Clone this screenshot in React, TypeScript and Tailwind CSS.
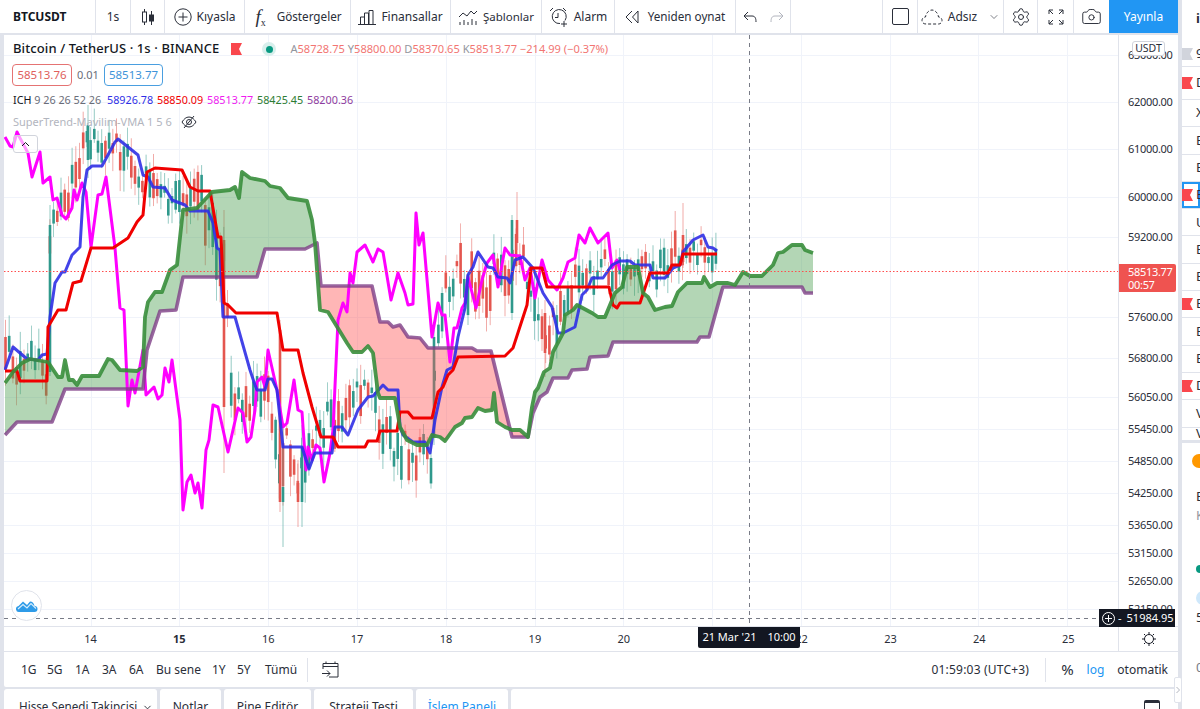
import { Camera, ChevronDown, Settings } from "lucide-react";
import type { ReactNode } from "react";

type P = [number, number];

const magenta: P[] = [[5,137],[10,146],[13,147],[17,132],[20,138],[28,153],[32,177],[40,152],[43,183],[50,177],[53,200],[57,198],[62,215],[66,219],[72,208],[74,190],[77,200],[82,183],[86,192],[91,247],[98,195],[102,194],[106,177],[115,248],[120,308],[124,310],[128,406],[132,380],[135,393],[143,350],[146,395],[154,387],[158,399],[162,395],[165,368],[169,382],[172,360],[180,420],[183,510],[187,482],[191,475],[195,493],[198,483],[202,508],[206,450],[209,440],[213,405],[218,407],[228,452],[238,408],[243,413],[247,442],[251,437],[255,410],[257,382],[262,377],[265,387],[268,350],[277,390],[283,427],[287,423],[294,380],[298,410],[302,412],[306,470],[308,447],[312,460],[316,445],[320,448],[324,482],[330,453],[333,430],[338,320],[343,303],[347,312],[350,273],[353,283],[357,252],[365,245],[373,262],[378,249],[383,252],[391,300],[398,273],[405,293],[408,305],[413,304],[416,213],[419,245],[423,233],[432,337],[438,303],[442,315],[445,315],[450,362],[454,328],[457,328],[462,308],[465,303],[468,277],[476,308],[482,280],[487,263],[493,255],[498,287],[505,248],[510,255],[520,256],[525,280],[530,268],[535,298],[542,260],[548,280],[557,290],[563,278],[568,262],[575,258],[579,235],[585,243],[590,228],[598,243],[608,233],[612,268],[617,260],[620,270]];
const blue: P[] = [[5,370],[13,347],[27,359],[38,360],[42,355],[47,354],[50,317],[55,283],[62,272],[65,272],[72,255],[80,247],[83,197],[87,170],[92,166],[102,166],[115,142],[118,139],[128,147],[138,155],[143,175],[148,177],[153,187],[165,188],[172,200],[185,205],[190,211],[208,211],[213,223],[217,248],[220,250],[223,317],[235,317],[250,370],[255,385],[257,390],[265,390],[268,379],[272,379],[277,390],[283,447],[302,447],[309,469],[315,453],[332,453],[335,427],[342,427],[348,435],[358,410],[368,397],[373,396],[383,385],[388,390],[398,390],[400,427],[403,435],[413,442],[425,442],[430,453],[435,420],[442,387],[447,370],[453,367],[458,337],[465,308],[468,275],[473,267],[478,252],[488,267],[493,268],[498,277],[507,278],[510,283],[515,260],[523,257],[533,268],[543,293],[552,307],[558,333],[563,333],[575,327],[582,295],[587,290],[592,278],[603,278],[612,265],[620,261],[630,261],[635,265],[650,265],[653,278],[665,278],[673,268],[680,265],[683,252],[693,240],[703,235],[708,247],[713,248],[717,251]];
const red: P[] = [[5,371],[17,371],[20,381],[47,381],[48,327],[58,310],[66,310],[73,283],[81,281],[91,248],[113,248],[122,242],[128,238],[137,222],[143,215],[147,172],[155,168],[182,170],[190,187],[198,191],[210,191],[218,237],[221,237],[224,303],[228,305],[236,313],[277,313],[283,350],[298,350],[303,373],[312,407],[321,437],[333,437],[338,447],[365,447],[368,441],[377,441],[380,431],[397,431],[400,412],[408,412],[413,418],[432,418],[438,392],[443,387],[448,375],[453,370],[458,357],[505,356],[513,348],[527,305],[531,268],[542,268],[547,287],[609,287],[613,305],[617,308],[620,303],[640,303],[650,273],[668,273],[672,265],[680,265],[683,254],[717,254]];
const spanA: P[] = [[5,383],[13,372],[22,363],[30,359],[48,362],[58,377],[62,377],[65,360],[69,380],[73,380],[77,385],[82,376],[99,376],[108,359],[112,360],[120,370],[137,371],[143,367],[145,317],[148,302],[155,292],[162,292],[170,270],[177,265],[183,210],[197,208],[212,192],[230,190],[235,187],[239,198],[242,172],[250,178],[265,181],[270,186],[280,188],[288,198],[307,201],[312,220],[315,243],[320,310],[328,312],[347,343],[353,352],[362,352],[368,346],[373,353],[378,393],[380,398],[395,398],[400,427],[407,440],[417,445],[427,445],[432,435],[440,437],[445,441],[455,427],[462,423],[465,418],[472,417],[478,408],[485,411],[492,410],[494,393],[497,422],[505,427],[512,430],[520,430],[528,437],[532,407],[535,392],[538,388],[544,372],[550,368],[553,352],[563,333],[565,315],[573,310],[577,305],[592,313],[598,317],[605,317],[615,293],[622,287],[627,267],[638,267],[643,293],[648,297],[655,310],[665,307],[672,306],[678,292],[687,283],[702,283],[704,277],[710,287],[717,283],[728,283],[735,285],[743,272],[750,276],[762,276],[773,265],[778,253],[783,252],[792,245],[802,245],[805,250],[813,253]];
const spanB: P[] = [[5,435],[17,422],[52,422],[65,389],[143,389],[147,350],[160,311],[176,310],[183,277],[257,277],[265,249],[305,249],[317,243],[321,286],[372,286],[380,322],[388,322],[393,327],[400,325],[408,337],[420,338],[428,348],[472,348],[477,351],[491,351],[512,437],[528,437],[533,413],[540,397],[547,392],[553,378],[568,378],[572,370],[587,369],[590,357],[608,356],[613,342],[697,342],[700,337],[709,337],[722,290],[723,287],[802,287],[805,293],[813,293]];

const pts = (l: P[]) => l.map((p) => p.join(",")).join(" ");
// cloud piece between the two spans, cut on x
const cloud = (x0: number, x1: number) =>
  pts([
    ...spanA.filter((p) => p[0] >= x0 && p[0] <= x1),
    ...spanB.filter((p) => p[0] >= x0 && p[0] <= x1).reverse(),
  ]);

// body envelope of the candles: x, top, bottom
const envelope: [number, number, number][] = [[5,335,395],[30,340,395],[48,350,395],[50,205,250],[60,190,235],[85,125,185],[92,125,170],[120,130,175],[135,150,195],[160,180,235],[205,170,250],[215,210,320],[224,240,330],[232,365,430],[270,375,435],[278,400,500],[300,470,505],[304,420,500],[330,395,450],[370,375,445],[400,425,495],[432,430,485],[436,330,390],[450,235,330],[480,255,325],[515,220,300],[535,255,345],[546,310,365],[570,265,325],[600,245,305],[640,255,305],[680,225,285],[717,245,280]];
const envAt = (x: number) => {
  for (let i = 1; i < envelope.length; i++) {
    const a = envelope[i - 1];
    const b = envelope[i];
    if (x <= b[0]) {
      const t = (x - a[0]) / (b[0] - a[0]);
      return [a[1] + (b[1] - a[1]) * t, a[2] + (b[2] - a[2]) * t];
    }
  }
  return [250, 275];
};
let seed = 7321;
const rnd = () => {
  seed = (seed * 16807) % 2147483647;
  return seed / 2147483647;
};
const candles = Array.from({ length: 193 }, (_, i) => {
  const x = 5.5 + i * 3.7;
  const [t, b] = envAt(x);
  const h = b - t;
  const top = t + rnd() * h * 0.55;
  const bot = top + 5 + rnd() * h * 0.45;
  return { x, top, bot, hi: top - 3 - rnd() * 18, lo: bot + 3 + rnd() * 18, up: rnd() > 0.5 };
});
// the tall bars that stand out in the picture
const tall = [
  { x: 50, top: 225, bot: 372, hi: 205, lo: 376, up: true },
  { x: 88, top: 125, bot: 160, hi: 105, lo: 178, up: true },
  { x: 224, top: 240, bot: 407, hi: 210, lo: 473, up: false },
  { x: 280, top: 330, bot: 502, hi: 320, lo: 512, up: false },
  { x: 283, top: 487, bot: 502, hi: 425, lo: 547, up: true },
  { x: 298, top: 483, bot: 502, hi: 460, lo: 527, up: false },
  { x: 302, top: 447, bot: 502, hi: 425, lo: 527, up: true },
  { x: 434, top: 337, bot: 437, hi: 330, lo: 445, up: true },
  { x: 512, top: 220, bot: 313, hi: 215, lo: 320, up: true },
  { x: 517, top: 220, bot: 243, hi: 192, lo: 250, up: false },
  { x: 545, top: 313, bot: 353, hi: 300, lo: 377, up: false },
  { x: 683, top: 235, bot: 262, hi: 203, lo: 268, up: false },
];

const grid = [91, 179, 268, 357, 446, 535, 623, 712, 801, 890, 978, 1067];
const prices: [string, number][] = [["63000.00",55],["62000.00",102],["61000.00",149],["60000.00",197],["59200.00",237],["57600.00",317],["56800.00",358],["56050.00",397],["55450.00",429],["54850.00",461],["54250.00",493],["53650.00",525],["53150.00",553],["52650.00",581],["52150.00",609]];

function Tool({ w, children, last }: { w: string; children?: ReactNode; last?: boolean }) {
  return (
    <div className={`${w} h-full flex items-center justify-center gap-[5px] shrink-0 ${last ? "" : "border-r border-[#e0e3eb]"}`}>
      {children}
    </div>
  );
}

function Flag({ gray }: { gray?: boolean }) {
  return (
    <svg width="11" height="12" viewBox="0 0 11 12" className="shrink-0">
      <path d="M0 0H11L8 6L11 12H0Z" fill={gray ? "#d1d4dc" : "#f9474d"} />
    </svg>
  );
}

function WatchRow({ t, flag, gray, active, h }: { t: string; flag?: boolean; gray?: boolean; active?: boolean; h: string }) {
  return (
    <div className={`${h} flex items-center shrink-0 border-b border-[#e0e3eb] ${active ? "shadow-[inset_0_0_0_2px_#2196f3]" : ""}`}>
      <div className="w-[12px] shrink-0">{flag && <Flag gray={gray} />}</div>
      <span className="text-[13px] ml-[2px]">{t}</span>
    </div>
  );
}

export default function App() {
  return (
    <div className="w-[1200px] h-[709px] overflow-hidden bg-[#e0e3eb] flex text-[#2a2e39] text-[12px] font-['Noto_Sans',sans-serif]">
      <div className="w-[1178px] shrink-0 flex flex-col">
        {/* top toolbar */}
        <div className="h-[33px] mb-[2px] bg-white flex items-center text-[12px] shrink-0">
          <Tool w="w-[96px]"><span className="font-bold w-full pl-[13px] text-[12px] text-[#131722]">BTCUSDT</span></Tool>
          <Tool w="w-[35px]">1s</Tool>
          <Tool w="w-[34px]">
            <svg width="16" height="20" viewBox="0 0 16 20" fill="none" stroke="#2a2e39"><path d="M4.500 2v16M11.500 4v14" /><rect x="2.500" y="5" width="4" height="10" fill="#fff" /><rect x="9.500" y="8" width="4" height="6" fill="#2a2e39" /></svg>
          </Tool>
          <Tool w="w-[80px]">
            <svg width="18" height="18" viewBox="0 0 18 18" fill="none" stroke="#2a2e39"><circle cx="9" cy="9" r="8.200" /><path d="M9 4.500v9M4.500 9h9" /></svg>
            <span>Kıyasla</span>
          </Tool>
          <Tool w="w-[106px]">
            <span className="font-['Liberation_Serif',serif] italic text-[19px] leading-none mr-[6px] ml-[2px]">f<sub className="text-[10px] not-italic">x</sub></span>
            <span className="text-[11.700px]">Göstergeler</span>
          </Tool>
          <Tool w="w-[100px]">
            <svg width="18" height="18" viewBox="0 0 18 18" fill="none" stroke="#2a2e39"><path d="M0 16.500h18M2.500 16V9h4v7M6.500 16V5h4v11M11 16V2.500h4V16" /></svg>
            <span>Finansallar</span>
          </Tool>
          <Tool w="w-[91px]">
            <svg width="20" height="18" viewBox="0 0 20 18" fill="none" stroke="#2a2e39"><path d="M1 9l4-4 4 3 4-5 3 3 3-3" /><path d="M2 17v-3M6 17v-5M10 17v-3M14 17v-6M18 17v-4" /></svg>
            <span className="text-[11.500px]">Şablonlar</span>
          </Tool>
          <Tool w="w-[73px]">
            <svg width="20" height="20" viewBox="0 0 20 20" fill="none" stroke="#2a2e39"><path d="M11 16.500a7 7 0 1 1 5-3M9 6v4.500H6M1 4l3-3M14 1l3 3M15 14v6M12 17h6" /></svg>
            <span>Alarm</span>
          </Tool>
          <Tool w="w-[121px]">
            <svg width="15" height="14" viewBox="0 0 15 14" fill="none" stroke="#2a2e39"><path d="M7 1L1 7l6 6M13 1L7.500 7l5.500 6z" /></svg>
            <span className="ml-[3px] text-[11.700px]">Yeniden oynat</span>
          </Tool>
          <Tool w="w-[55px]">
            <svg width="14" height="12" viewBox="0 0 14 12" fill="none" stroke="#2a2e39"><path d="M5 1L1 5l4 4M1 5h8c3 0 4 2 4 6" /></svg>
            <svg width="14" height="12" viewBox="0 0 14 12" fill="none" stroke="#b2b5be" className="ml-[8px]"><path d="M9 1l4 4-4 4M13 5H5C2 5 1 7 1 11" /></svg>
          </Tool>
          <Tool w="w-[92px]" />
          <Tool w="w-[35px]"><div className="w-[17px] h-[17px] border border-[#2a2e39] rounded-[2px]" /></Tool>
          <Tool w="w-[86px]">
            <svg width="22" height="16" viewBox="0 0 22 16" fill="none" stroke="#2a2e39" strokeDasharray="3 2"><path d="M5 15C2 15 1 13 1 11.500 1 9 3 8 4.500 8 5 4 8 1 11 1c3 0 6 3 6.500 7 2 0 3.500 1.500 3.500 3.500 0 2-1.500 3.500-3.500 3.500z" /></svg>
            <span>Adsız</span>
            <ChevronDown size={12} strokeWidth={1.2} className="ml-[6px]" />
          </Tool>
          <Tool w="w-[34px]"><Settings size={20} strokeWidth={1.200} color="#2a2e39" /></Tool>
          <Tool w="w-[36px]">
            <svg width="16" height="16" viewBox="0 0 16 16" fill="none" stroke="#2a2e39"><path d="M1 5V1h4M1 1l4 4M15 5V1h-4M15 1l-4 4M1 11v4h4M1 15l4-4M15 11v4h-4M15 15l-4-4" /></svg>
          </Tool>
          <Tool w="w-[35px]" last><Camera size={21} strokeWidth={1.100} color="#2a2e39" /></Tool>
          <div className="flex-1 h-full bg-[#2196f3] text-white flex items-center justify-center text-[12px]">Yayınla</div>
        </div>

        <div className="flex-1 min-h-0 flex pl-[4px]">
          <div className="flex-1 min-w-0 flex flex-col">
            <div className="h-[591px] flex shrink-0">
              {/* chart */}
              <div className="w-[1114px] relative bg-white overflow-hidden">
                <svg width="1114" height="591" viewBox="4 35 1114 591" className="absolute inset-0">
                  {grid.map((x) => <line key={x} x1={x + 0.5} x2={x + 0.5} y1="35" y2="626" stroke="#f0f3fa" />)}
                  {prices.map(([p, y]) => <line key={p} x1="4" x2="1118" y1={y + 0.5} y2={y + 0.5} stroke="#f0f3fa" />)}
                  {[...candles, ...tall].map((c, i) => (
                    <g key={i} stroke={c.up ? "#4fa89d" : "#e8736e"} fill={c.up ? "#2f998c" : "#e4564f"}>
                      <line x1={c.x} x2={c.x} y1={c.hi} y2={c.lo} strokeWidth="0.800" opacity="0.75" />
                      <rect x={c.x - 1.300} y={c.top} width="2.600" height={c.bot - c.top} stroke="none" />
                    </g>
                  ))}
                  <polygon points={cloud(5, 143)} fill="#4a9e4f" fillOpacity="0.42" />
                  <polygon points={cloud(143, 317)} fill="#4a9e4f" fillOpacity="0.42" />
                  <polygon points={cloud(317, 528)} fill="#ff5252" fillOpacity="0.42" />
                  <polygon points={cloud(528, 813)} fill="#4a9e4f" fillOpacity="0.42" />
                  <polyline points={pts(magenta)} fill="none" stroke="#ff00ff" strokeWidth="3" strokeLinejoin="round" />
                  <polyline points={pts(spanB)} fill="none" stroke="#7e3f87" strokeWidth="3.600" strokeOpacity="0.8" strokeLinejoin="round" />
                  <polyline points={pts(blue)} fill="none" stroke="#2f2fe6" strokeWidth="3" strokeOpacity="0.9" strokeLinejoin="round" />
                  <polyline points={pts(red)} fill="none" stroke="#f00000" strokeWidth="3" strokeLinejoin="round" />
                  <polyline points={pts(spanA)} fill="none" stroke="#388e3c" strokeWidth="3.800" strokeOpacity="0.9" strokeLinejoin="round" />
                  <line x1="4" x2="1118" y1="271.500" y2="271.500" stroke="#ff4d4d" strokeDasharray="1.500 2" />
                  <line x1="749.500" x2="749.500" y1="35" y2="626" stroke="#787b86" strokeDasharray="4 4" />
                  <line x1="4" x2="1118" y1="618.500" y2="618.500" stroke="#787b86" strokeDasharray="4 4" />
                </svg>

                {/* legend */}
                <div className="absolute left-[9px] top-[5px] flex flex-col items-start">
                  <div className="flex items-center h-[18px]">
                    <span className="text-[13px] font-medium text-[#131722] tracking-[0.1px] whitespace-nowrap">Bitcoin / TetherUS · 1s · BINANCE</span>
                    <span className="ml-[12px]"><Flag /></span>
                    <span className="ml-[20px] w-[14px] h-[14px] rounded-full bg-[#d8efec] flex items-center justify-center"><span className="w-[7px] h-[7px] rounded-full bg-[#089981]" /></span>
                    <span className="ml-[14px] text-[11.100px] text-[#ef5350] opacity-80 whitespace-nowrap">
                      <span className="text-[#787b86]">A</span>58728.75 <span className="text-[#787b86]">Y</span>58800.00 <span className="text-[#787b86]">D</span>58370.65 <span className="text-[#787b86]">K</span>58513.77 −214.99 (−0.37%)
                    </span>
                  </div>
                  <div className="flex items-center mt-[6px] text-[11.500px]">
                    <span className="w-[60px] h-[22px] flex items-center justify-center border border-[#e57373] rounded-[4px] bg-white text-[#e0605c] -ml-[1px]">58513.76</span>
                    <span className="w-[32px] text-center text-[11px] text-[#6a6d78]">0.01</span>
                    <span className="w-[59px] h-[22px] flex items-center justify-center border border-[#4a9fe0] rounded-[4px] bg-white text-[#3d93d9]">58513.77</span>
                  </div>
                  <div className="flex items-center mt-[6px] h-[16px] text-[10.800px] whitespace-nowrap">
                    <span className="w-[94px]"><span className="text-[#131722]">ICH</span> <span className="text-[#6a6d78]">9 26 26 52 26</span></span>
                    <span className="w-[50px] text-[#2f2fe6]">58926.78</span>
                    <span className="w-[50px] text-[#f00000]">58850.09</span>
                    <span className="w-[50px] text-[#f01cf0]">58513.77</span>
                    <span className="w-[50px] text-[#2e7d32]">58425.45</span>
                    <span className="text-[#8e3c9e]">58200.36</span>
                  </div>
                  <div className="flex items-center mt-[6px] h-[16px] text-[11px] text-[#b2b5be] whitespace-nowrap">
                    <span>SuperTrend-Mavilim-VMA 1 5 6</span>
                    <svg width="16" height="14" viewBox="0 0 16 14" fill="none" stroke="#2a2e39" className="ml-[9px]"><path d="M1 7c2-3 4-5 7-5s5 2 7 5c-2 3-4 5-7 5s-5-2-7-5z" /><circle cx="8" cy="7" r="2.500" /><path d="M3 13L13 1" /></svg>
                  </div>
                </div>

                <div className="absolute left-[9px] top-[100px] w-[25px] h-[18px] border border-[#d1d4dc] rounded-[3px] bg-white/60 flex items-center justify-center">
                  <svg width="9" height="6" viewBox="0 0 9 6" fill="none" stroke="#131722"><path d="M1 5l3.500-3.500L8 5" /></svg>
                </div>

                {/* logo */}
                <div className="absolute left-[7px] top-[555px] w-[31px] h-[31px] rounded-full bg-white border border-[#e0e3eb] flex items-center justify-center">
                  <svg width="22" height="14" viewBox="0 0 22 14"><path d="M3.500 13a3 3 0 0 1-1-6L7 2.500l4 3.500 3-3.500c2.500 0 4 2 4.500 4.500a3 3 0 0 1 0 6z" fill="#2e9be8" /><path d="M2 10l5-4.500 4 3.500 4-4.500 5 5" fill="none" stroke="#d6ecfb" strokeWidth="1.200" /></svg>
                </div>
              </div>

              {/* price axis */}
              <div className="flex-1 relative bg-white border-l border-[#e0e3eb]">
                {prices.map(([p, y]) => (
                  <span key={p} className="absolute left-[9px] text-[11px] leading-[14px] tracking-[-0.3px] text-[#2a2e39]" style={{ top: y - 35 - 7 }}>{p}</span>
                ))}
                <div className="absolute left-[13px] top-[6px] w-[33px] h-[15px] bg-white border border-[#d1d4dc] rounded-[3px] flex items-center justify-center text-[10.500px]">USDT</div>
                <div className="absolute left-0 top-[229px] w-[57px] h-[28px] bg-[#ef5350] rounded-r-[2px] text-white text-[11px] leading-[13px] tracking-[-0.3px] pl-[9px] pt-[1px]">
                  <div>58513.77</div>
                  <div>00:57</div>
                </div>
              </div>
            </div>

            {/* time axis */}
            <div className="h-[25px] flex border-t border-[#e0e3eb] bg-white shrink-0 relative">
              <div className="w-[1114px] flex items-center pl-[42px] text-[11px] text-[#2a2e39]">
                {["14","15","16","17","18","19","20","21","22","23","24","25"].map((d) => (
                  <span key={d} className={`w-[88.900px] text-center shrink-0 ${d === "15" ? "font-bold" : ""}`}>{d}</span>
                ))}
              </div>
              <div className="flex-1 border-l border-[#e0e3eb] flex items-center justify-center">
                <svg width="14" height="14" viewBox="0 0 14 14" fill="none" stroke="#131722"><circle cx="7" cy="7" r="4.500" /><path d="M7 0v2M7 12v2M0 7h2M12 7h2M2 2l1.400 1.400M10.600 10.600L12 12M2 12l1.400-1.400M10.600 3.400L12 2" /></svg>
              </div>
              <div className="absolute left-[694px] top-0 w-[102px] h-[21px] bg-[#131722] rounded-b-[2px] text-white text-[11px] flex items-center justify-center gap-[11px]">
                <span>21 Mar '21</span><span>10:00</span>
              </div>
              <div className="absolute left-[1095px] -top-[18px] w-[76px] h-[18px] bg-[#131722] text-white text-[11px] flex items-center pl-[3px] gap-[3px]">
                <svg width="13" height="13" viewBox="0 0 13 13" fill="none" stroke="#fff"><circle cx="6.500" cy="6.500" r="6" /><path d="M6.500 3v7M3 6.500h7" /></svg>
                <span>-</span><span className="ml-[2px]">51984.95</span>
              </div>
            </div>

            {/* range bar */}
            <div className="h-[36px] bg-white border-t border-[#e0e3eb] flex items-center shrink-0 rounded-b-[2px]">
              <div className="flex items-center text-[12px] h-full">
                <span className="ml-[17px] w-[26px]">1G</span>
                <span className="w-[28px]">5G</span>
                <span className="w-[27px]">1A</span>
                <span className="w-[27px]">3A</span>
                <span className="w-[27px]">6A</span>
                <span className="w-[56px]">Bu sene</span>
                <span className="w-[25px]">1Y</span>
                <span className="w-[28px]">5Y</span>
                <span className="w-[42px]">Tümü</span>
                <span className="w-px h-[24px] bg-[#e0e3eb]" />
                <svg width="17" height="17" viewBox="0 0 17 17" fill="none" stroke="#2a2e39" className="ml-[14px]"><path d="M1 5.500h15M4 .500v2M13 .500v2M1 8V2.500h15V16H7M0 12.500h8M5 9.500l3 3-3 3" /></svg>
              </div>
              <div className="ml-auto flex items-center h-full text-[12px]">
                <span className="tracking-[0.2px]">01:59:03 (UTC+3)</span>
                <span className="w-px h-[24px] bg-[#e0e3eb] ml-[16px]" />
                <span className="text-[15px] ml-[15px]">%</span>
                <span className="text-[#2196f3] ml-[13px]">log</span>
                <span className="ml-[13px] mr-[10px]">otomatik</span>
              </div>
            </div>

            {/* bottom tabs */}
            <div className="mt-[2px] h-[20px] flex gap-[3px] text-[12px] shrink-0">
              <div className="w-[153px] bg-white rounded-t-[3px] flex items-start pl-[15px] pt-[9px] gap-[5px] whitespace-nowrap"><span className="text-[11.700px]">Hisse Senedi Takipçisi</span> <ChevronDown size={11} className="mt-[4px]" /></div>
              <div className="w-[61px] bg-white rounded-t-[3px] text-center pt-[9px]">Notlar</div>
              <div className="w-[87px] bg-white rounded-t-[3px] text-center pt-[9px]">Pine Editör</div>
              <div className="w-[99px] bg-white rounded-t-[3px] text-center pt-[9px]">Strateji Testi</div>
              <div className="w-[92px] bg-white rounded-t-[3px] text-center pt-[9px] text-[#2196f3]">İşlem Paneli</div>
              <div className="flex-1 bg-white rounded-t-[3px] flex justify-end pr-[18px] pt-[11px]">
                <div className="w-[16px] h-[16px] border border-[#2a2e39] rounded-[2px] border-t-[3px] shrink-0" />
              </div>
            </div>
          </div>
        </div>
      </div>

      {/* watchlist sliver */}
      <div className="w-[4px] shrink-0 relative">
        <div className="absolute left-[-4px] top-[677px] w-[8px] h-[26px] bg-white rounded-[2px] border border-[#e0e3eb] flex items-center justify-center">
          <svg width="4" height="8" viewBox="0 0 4 8" fill="none" stroke="#b2b5be"><path d="M.500 1l3 3-3 3" /></svg>
        </div>
      </div>
      <div className="flex-1 min-w-0 overflow-hidden flex flex-col">
        <div className="bg-white h-[440px] shrink-0 flex flex-col">
          <div className="h-[41px] shrink-0 flex items-center pl-[14px] pb-[3px] font-bold text-[13px]">iz</div>
          <WatchRow h="h-[26px]" t="9" flag gray />
          <WatchRow h="h-[33px]" t="D" flag />
          <WatchRow h="h-[27.300px]" t="X" />
          <WatchRow h="h-[27.300px]" t="E" />
          <WatchRow h="h-[27.300px]" t="E" />
          <WatchRow h="h-[27.300px]" t="E" flag active />
          <WatchRow h="h-[27.300px]" t="U" />
          <WatchRow h="h-[27.300px]" t="E" />
          <WatchRow h="h-[27.300px]" t="E" />
          <WatchRow h="h-[27.300px]" t="E" flag />
          <WatchRow h="h-[27.300px]" t="E" />
          <WatchRow h="h-[27.300px]" t="E" />
          <WatchRow h="h-[27.300px]" t="D" flag />
          <WatchRow h="h-[27.300px]" t="V" />
          <WatchRow h="h-[13px]" t="V" />
        </div>
        <div className="mt-[3px] flex-1 bg-white relative text-[13px] overflow-hidden">
          <span className="absolute left-[10px] top-[11px] w-[14px] h-[14px] rounded-full bg-[#ff9800]" />
          <span className="absolute left-[14px] top-[44px]">E</span>
          <span className="absolute left-[14px] top-[63px] text-[#9598a1]">K</span>
          <span className="absolute left-[14px] top-[122px] w-[8px] h-[8px] rounded-full bg-[#089981]" />
          <span className="absolute left-[14px] top-[148px] w-[14px] h-[14px] rounded-full bg-[#cfe8fb]" />
          <span className="absolute left-[14px] top-[165px]">5</span>
          <span className="absolute left-[14px] top-[215px] text-[#787b86]">0</span>
        </div>
      </div>
    </div>
  );
}
